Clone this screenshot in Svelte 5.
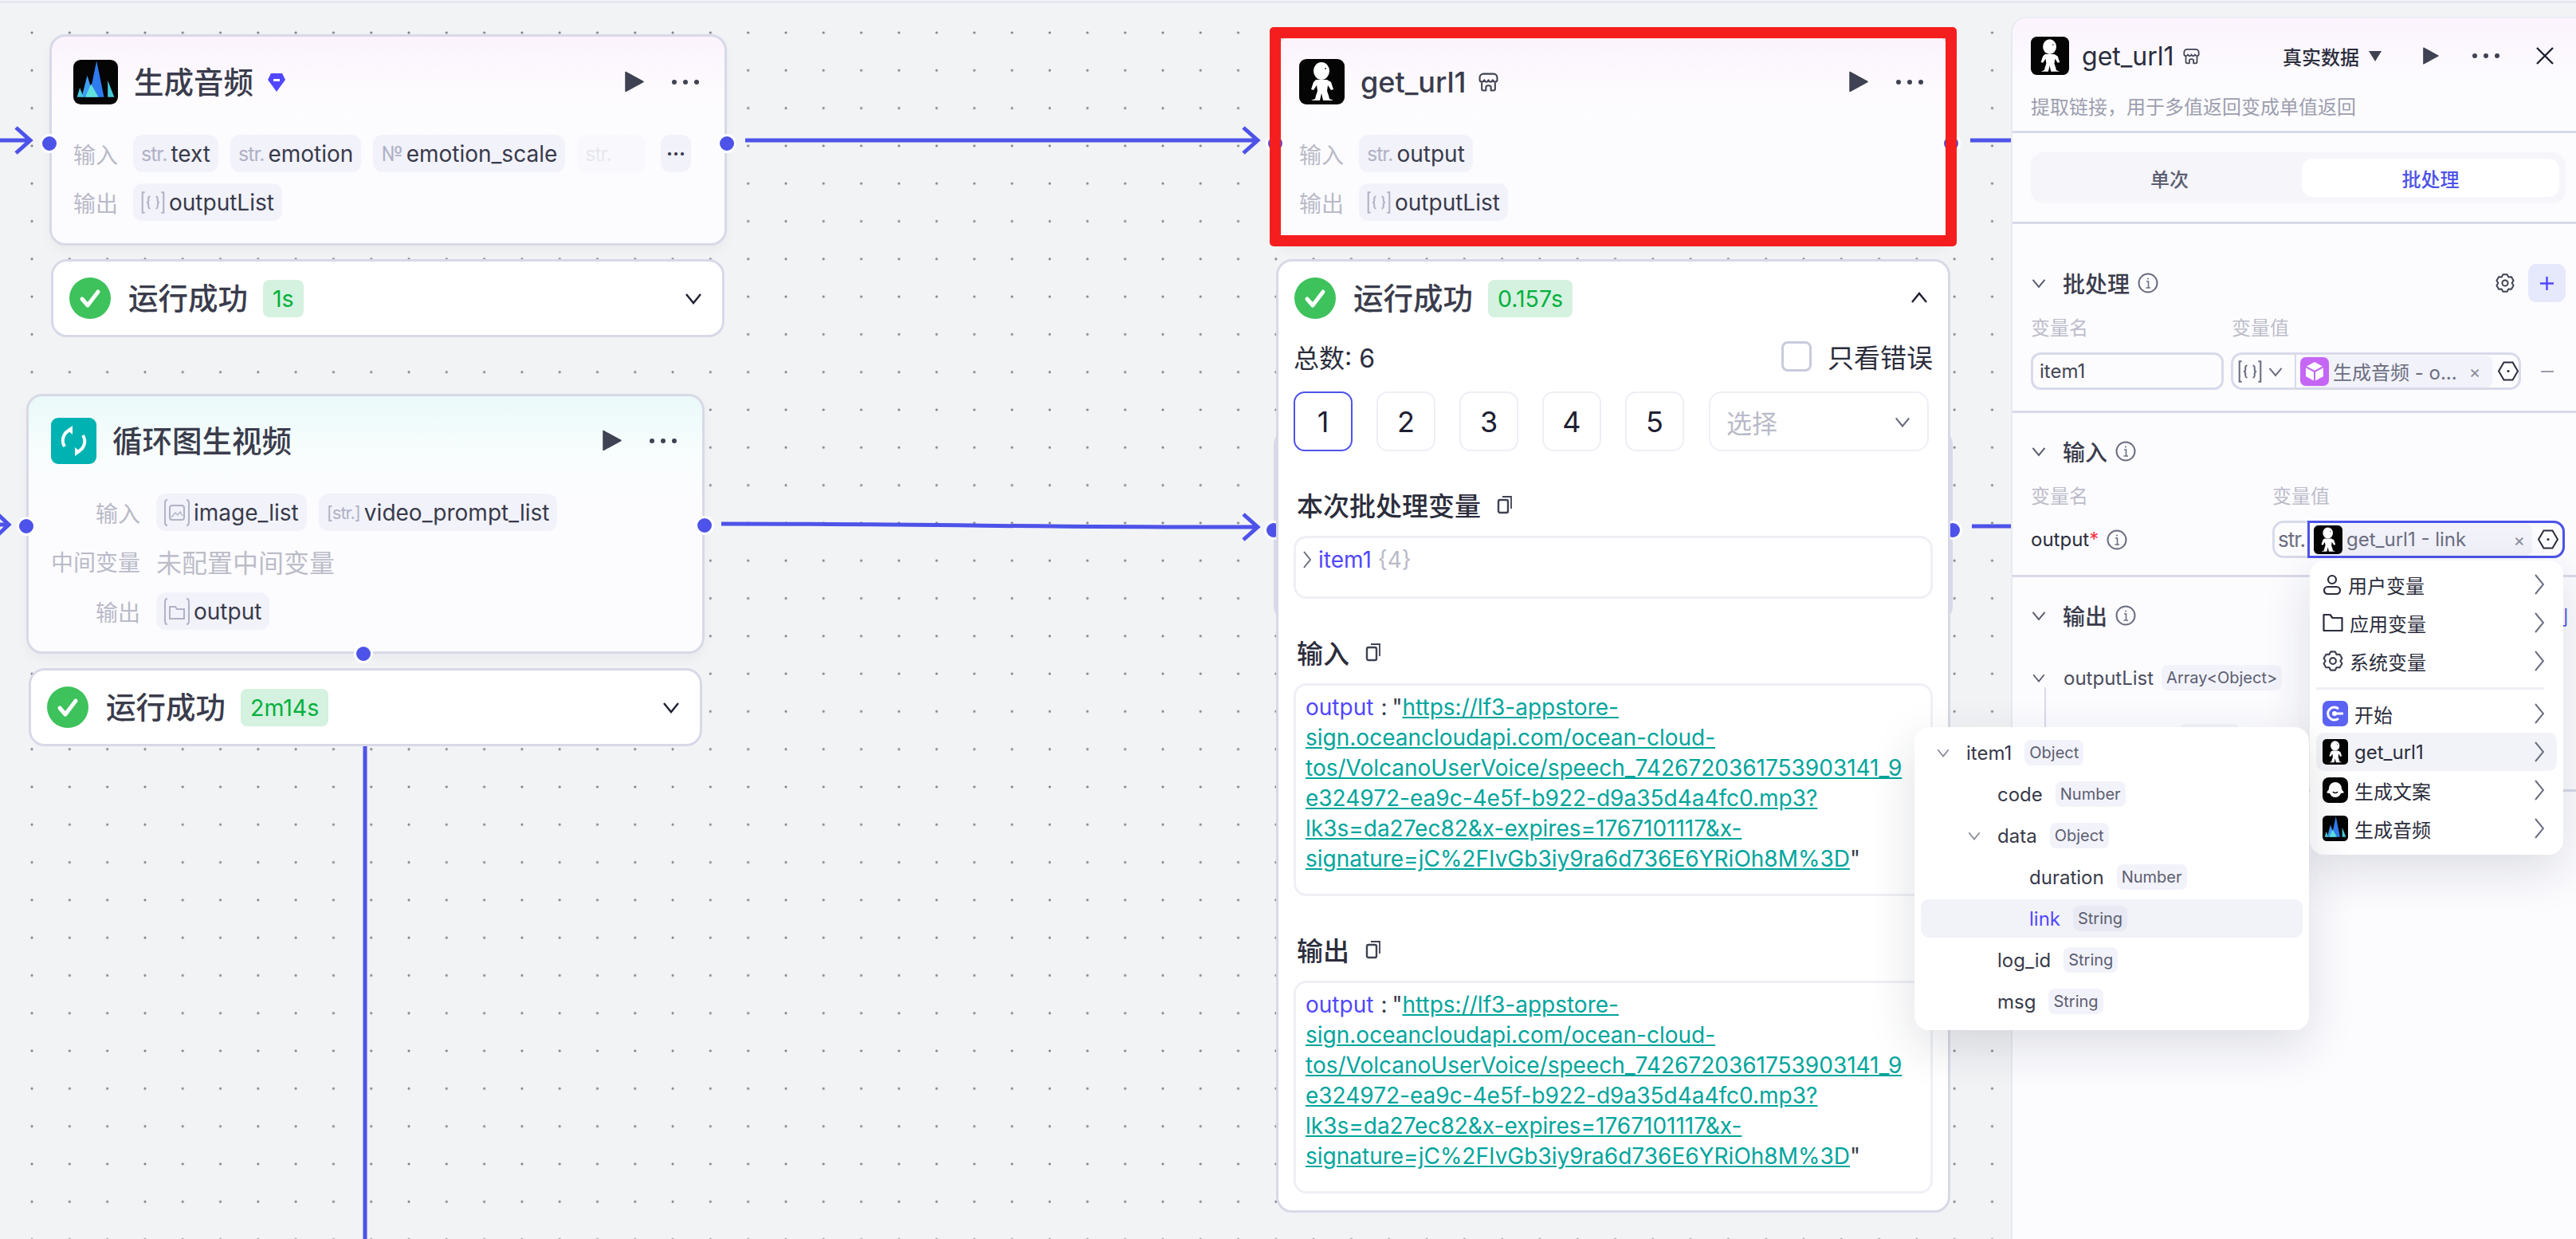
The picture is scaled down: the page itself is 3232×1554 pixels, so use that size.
<script>
  const url = "https://lf3-appstore-sign.oceancloudapi.com/ocean-cloud-tos/VolcanoUserVoice/speech_7426720361753903141_9e324972-ea9c-4e5f-b922-d9a35d4a4fc0.mp3?lk3s=da27ec82&x-expires=1767101117&x-signature=jC%2FIvGb3iy9ra6d736E6YRiOh8M%3D";
  const pages = [1, 2, 3, 4, 5];
  const tree = [
    { name: "item1", type: "Object", depth: 0, open: true },
    { name: "code", type: "Number", depth: 1 },
    { name: "data", type: "Object", depth: 1, open: true },
    { name: "duration", type: "Number", depth: 2 },
    { name: "link", type: "String", depth: 2, active: true },
    { name: "log_id", type: "String", depth: 1 },
    { name: "msg", type: "String", depth: 1 }
  ];

  // six lobed outline for the settings icons
  function gearPath() {
    let pts = [];
    for (let k = 0; k < 6; k++) {
      let a = k * 60 - 90;
      for (let [off, r] of [[-14, 11], [14, 11], [30, 8.6]]) {
        let t = ((a + off) * Math.PI) / 180;
        pts.push((12 + r * Math.cos(t)).toFixed(2) + " " + (12 + r * Math.sin(t)).toFixed(2));
      }
    }
    return "M" + pts.join("L") + "Z";
  }
  const gearD = gearPath();
</script>

{#snippet person(size)}
  <svg class="logo" width={size} height={size} viewBox="0 0 57 57">
    <rect width="57" height="57" rx="9" fill="#050505" />
    <ellipse cx="28" cy="15" rx="10" ry="11" fill="#fff" />
    <path fill="#fff" d="M21 26h14l5 3 3 9-3 1-4-6-1 7 2 6 1 4 5 2H30l-2-9-2 9H15l5-2 1-4 2-6-1-7-4 6-3-1 3-9z" />
    <circle cx="33" cy="12" r="1" fill="#333" />
  </svg>
{/snippet}

{#snippet spikes(size)}
  <svg class="logo" width={size} height={size} viewBox="0 0 48 48">
    <rect width="48" height="48" rx="8" fill="#050505" />
    <path fill="#2f7bf0" d="M25 1l8 39H17z" />
    <path fill="#3f9df5" d="M15 17l7 23H9z" />
    <path fill="#47c9dc" d="M7 30l4 10H4zM37 22l7 18h-7z" />
    <path fill="#5fe3dc" d="M19 26l8 14H13z" />
  </svg>
{/snippet}

{#snippet ghost(size)}
  <svg class="logo" width={size} height={size} viewBox="0 0 32 32">
    <rect width="32" height="32" rx="8" fill="#050505" />
    <path fill="#fff" d="M16 6c5 0 8 4 8 8 0 2 2 3 3 5-2 1-3 1-4 1-1 3-4 5-7 5s-6-2-7-5c-1 0-2 0-4-1 1-2 3-3 3-5 0-4 3-8 8-8z" />
    <path fill="none" stroke="#050505" stroke-width="1.5" d="M13 18c1 2 5 2 6 0" />
  </svg>
{/snippet}

{#snippet play(w, h)}
  <svg class="ico" width={w} height={h} viewBox="0 0 24 26"><path fill="#3f4252" d="M1 1l22 12L1 25z" stroke="#3f4252" stroke-linejoin="round" stroke-width="1.5" /></svg>
{/snippet}

{#snippet dots()}
  <svg class="ico" width="36" height="8" viewBox="0 0 36 8"><circle cx="4" cy="4" r="3" fill="#3f4252" /><circle cx="18" cy="4" r="3" fill="#3f4252" /><circle cx="32" cy="4" r="3" fill="#3f4252" /></svg>
{/snippet}

{#snippet check()}
  <svg class="ico" width="52" height="52" viewBox="0 0 52 52"><circle cx="26" cy="26" r="26" fill="#3dc25c" /><path d="M16 27l7 8 13-17" fill="none" stroke="#fff" stroke-width="5" stroke-linecap="round" stroke-linejoin="round" /></svg>
{/snippet}

{#snippet chev(w, color, dir)}
  <svg class="ico {dir}" width={w} height={w} viewBox="0 0 24 24"><path d="M3 7l9 11 9-11" fill="none" stroke={color} stroke-width="2.4" /></svg>
{/snippet}

{#snippet right()}
  <svg class="ico" width="12" height="26" viewBox="0 0 12 26"><path d="M1 1l10 12L1 25" fill="none" stroke="#6b6e80" stroke-width="2" /></svg>
{/snippet}

{#snippet copy()}
  <svg class="ico" width="20" height="24" viewBox="0 0 20 24" fill="none" stroke="#3f4252" stroke-width="2.4"><rect x="2" y="6" width="12" height="16" rx="2" /><path d="M7 2h9l2 0v15" stroke-width="1.8" /></svg>
{/snippet}

{#snippet info()}
  <svg class="ico" width="26" height="26" viewBox="0 0 26 26" fill="none" stroke="#6b6e80" stroke-width="2"><circle cx="13" cy="13" r="11.5" /><path d="M11 11h2.5v8M10.5 19h5.5" stroke-width="1.6" /><circle cx="13" cy="7.5" r="1" fill="#6b6e80" stroke="none" /></svg>
{/snippet}

{#snippet hex()}
  <svg class="ico" width="26" height="25" viewBox="0 0 26 25" fill="none" stroke="#2b2d3c" stroke-width="2"><path d="M7.5 1.5h11L25 12.5l-6.5 11h-11L1 12.5z" /><circle cx="13" cy="12.500" r="1.6" fill="#2b2d3c" stroke="none" /></svg>
{/snippet}

{#snippet gear(s)}
  <svg class="ico" width={s} height={s} viewBox="0 0 24 24" fill="none" stroke="#3f4252" stroke-width="2" stroke-linejoin="round"><path d={gearD} /><circle cx="12" cy="12" r="3.6" /></svg>
{/snippet}

{#snippet plug(w, h)}
  <svg class="ico" width={w} height={h} viewBox="0 0 24 23" fill="none" stroke="#3f4252" stroke-width="2" stroke-linejoin="round"><path d="M6 1.500h12c2.500 0 4.500 2 4.500 4.500v3c0 2.500-4.500 3-5.500 0-1 3-4 3-5 0-1 3-4 3-5 0-1 3-5.500 2.500-5.500 0V6c0-2.500 2-4.500 4.500-4.500z" /><path d="M4 12v8c0 1 1 1.500 2 1.500h3v-4c0-1 1-2 3-2s3 1 3 2v4h3c1 0 2-.5 2-1.500v-8" /></svg>
{/snippet}

{#snippet brace(color)}
  <svg class="ico" width="30" height="32" viewBox="0 0 26 30" preserveAspectRatio="none" fill="none" stroke={color} stroke-width="1.8"><path d="M4 3H1.500v24H4M22 3h2.500v24H22" /><path d="M10 8c-2 0-2 1-2 3v2c0 1-1 2-2 2 1 0 2 1 2 2v2c0 2 0 3 2 3M16 8c2 0 2 1 2 3v2c0 1 1 2 2 2-1 0-2 1-2 2v2c0 2 0 3-2 3" /></svg>
{/snippet}

<div class="canvas">
  <div class="topline"></div>

  <svg class="wires" width="3232" height="1554" viewBox="0 0 3232 1554" fill="none" stroke="#4d53e8" stroke-width="5">
    <path d="M0 176H37M20 160l18 16-18 16" />
    <path d="M935 176H1576M1560 160l18 16-18 16" />
    <path d="M0 658H10M-8 640l19 18-19 18" />
    <path d="M905 657C1200 657 1300 662 1576 661M1560 645l18 16-18 16" />
    <path d="M458 935V1554" />
    <path d="M2472 176H2523M2474 660H2523" />
  </svg>

  <section class="node n1">
    <header class="nhead">
      {@render spikes(56)}
      <h3 class="cjk">生成音频</h3>
      <svg class="ico badge" width="24" height="24" viewBox="0 0 24 24"><path fill="#5147ff" d="M5 1h14l4 8-11 15L1 9z" /><rect x="8" y="8" width="8" height="3" fill="#fff" /></svg>
      <span class="fill"></span>
      {@render play(24, 27)}
      <span class="gapdots">{@render dots()}</span>
    </header>
    <div class="row lab92">
      <span class="lab">输入</span>
      <span class="chip"><span class="mark">str.</span>text</span>
      <span class="chip"><span class="mark">str.</span>emotion</span>
      <span class="chip"><span class="mark">№</span>emotion_scale</span>
      <span class="chip faded"><span class="mark">str.</span></span>
      <span class="chip more">···</span>
    </div>
    <div class="row lab92">
      <span class="lab">输出</span>
      <span class="chip">{@render brace("#b0b2c6")}outputList</span>
    </div>
    <span class="handle hl"></span>
    <span class="handle hr"></span>
  </section>

  <div class="status s1">
    {@render check()}
    <b>运行成功</b>
    <span class="time">1s</span>
    <span class="fill"></span>
    {@render chev(24, "#1f2033", "")}
  </div>

  <section class="node n2">
    <header class="nhead">
      <svg class="logo" width="57" height="58" viewBox="0 0 57 58"><rect width="57" height="58" rx="9" fill="#00b2b2" /><path d="M17 36a14 14 0 0 1 8-21M40 22a14 14 0 0 1-8 21" fill="none" stroke="#fff" stroke-width="4" /><path d="M27 10v11l-7-6zM30 48V37l7 6z" fill="#fff" /></svg>
      <h3 class="cjk">循环图生视频</h3>
      <span class="fill"></span>
      {@render play(24, 27)}
      <span class="gapdots">{@render dots()}</span>
    </header>
    <div class="row lab2">
      <span class="lab">输入</span>
      <span class="chip"><svg class="ico" width="32" height="36" viewBox="0 0 32 36" fill="none" stroke="#b0b2c6" stroke-width="2"><path d="M4 2C1 2 1 4 1 6v24c0 2 0 4 3 4M28 2c3 0 3 2 3 4v24c0 2 0 4-3 4" /><rect x="7" y="9" width="18" height="18" rx="3" /><path d="M9 24l5-6 3 3 3-4 3 5" stroke-width="1.4" /></svg>image_list</span>
      <span class="chip"><span class="mark small">[str.]</span>video_prompt_list</span>
    </div>
    <div class="row lab2 tall">
      <span class="lab">中间变量</span>
      <span class="none">未配置中间变量</span>
    </div>
    <div class="row lab2">
      <span class="lab">输出</span>
      <span class="chip"><svg class="ico" width="32" height="36" viewBox="0 0 32 36" fill="none" stroke="#b0b2c6" stroke-width="2"><path d="M4 2C1 2 1 4 1 6v24c0 2 0 4 3 4M28 2c3 0 3 2 3 4v24c0 2 0 4-3 4" /><path d="M7 12h7l2 3h9v12H7z" /></svg>output</span>
    </div>
    <span class="handle hl"></span>
    <span class="handle hr"></span>
    <span class="handle hb"></span>
  </section>

  <div class="status s2">
    {@render check()}
    <b>运行成功</b>
    <span class="time">2m14s</span>
    <span class="fill"></span>
    {@render chev(24, "#1f2033", "")}
  </div>

  <section class="node n3">
    <header class="nhead">
      {@render person(57)}
      <h3>get_url1</h3>
      {@render plug(25, 24)}
      <span class="fill"></span>
      {@render play(24, 27)}
      <span class="gapdots">{@render dots()}</span>
    </header>
    <div class="row lab92">
      <span class="lab">输入</span>
      <span class="chip"><span class="mark">str.</span>output</span>
    </div>
    <div class="row lab92">
      <span class="lab">输出</span>
      <span class="chip">{@render brace("#b0b2c6")}outputList</span>
    </div>
    <span class="handle hl"></span>
    <span class="handle hr"></span>
  </section>
  <div class="redbox"></div>

  <div class="under">
    <span class="handle hl"></span>
    <span class="handle hr"></span>
  </div>

  <section class="result">
    <div class="rhead">
      {@render check()}
      <b>运行成功</b>
      <span class="time">0.157s</span>
      <span class="fill"></span>
      {@render chev(24, "#1f2033", "up")}
    </div>
    <div class="total">
      <span>总数: 6</span>
      <span class="fill"></span>
      <span class="box"></span>
      <span class="only">只看错误</span>
    </div>
    <div class="pager">
      {#each pages as p}
        <button class:cur={p === 1}>{p}</button>
      {/each}
      <div class="select"><span>选择</span>{@render chev(22, "#6b6e80", "")}</div>
    </div>
    <h4 class="first">本次批处理变量 {@render copy()}</h4>
    <div class="code short">
      <svg class="ico" width="12" height="24" viewBox="0 0 12 24"><path d="M2 2l8 10-8 10" fill="none" stroke="#6b6e80" stroke-width="2" /></svg>
      <span class="key">item1</span> <span class="cnt">{"{4}"}</span>
    </div>
    <h4>输入 {@render copy()}</h4>
    <div class="code"><span class="key">output</span><span class="colon">:</span>"<a href="#top">{url}</a>"</div>
    <h4>输出 {@render copy()}</h4>
    <div class="code"><span class="key">output</span><span class="colon">:</span>"<a href="#top">{url}</a>"</div>
  </section>

  <aside class="panel">
    <header class="phead">
      <div class="ptitle">
        {@render person(48)}
        <h2>get_url1</h2>
        {@render plug(21, 21)}
        <span class="fill"></span>
        <span class="mode">真实数据</span>
        <svg class="ico" width="16" height="14" viewBox="0 0 16 14"><path d="M0 1h16L8 14z" fill="#3f4252" /></svg>
        <span class="p1">{@render play(20, 22)}</span>
        <span class="p2">{@render dots()}</span>
        <svg class="ico close" width="22" height="22" viewBox="0 0 22 22"><path d="M1 1l20 20M21 1L1 21" stroke="#1f2033" stroke-width="2.4" /></svg>
      </div>
      <p>提取链接，用于多值返回变成单值返回</p>
    </header>

    <div class="tabwrap">
      <div class="tabs">
        <span>单次</span>
        <span class="on">批处理</span>
      </div>
    </div>

    <section class="sec batch">
      <div class="shead">
        {@render chev(20, "#5b5e70", "")}
        <b>批处理</b>
        {@render info()}
        <span class="fill"></span>
        {@render gear(24)}
        <span class="plus"><svg width="17" height="17" viewBox="0 0 17 17"><path d="M8.500 0v17M0 8.500h17" stroke="#5147ff" stroke-width="2.400" /></svg></span>
      </div>
      <div class="cols"><span class="c1">变量名</span><span>变量值</span></div>
      <div class="vars">
        <span class="input">item1</span>
        <div class="combo wide">
          <div class="ctype">{@render brace("#6b6e80")}{@render chev(20, "#6b6e80", "")}</div>
          <div class="cval">
            <span class="vchip">
              <svg class="logo" width="36" height="36" viewBox="0 0 36 36"><rect width="36" height="36" rx="7" fill="#c566f5" /><path d="M18 6l11 6v12l-11 6-11-6V12z" fill="#fff" /><path d="M7 12l11 6 11-6M18 18v12" stroke="#c566f5" stroke-width="2" fill="none" /></svg>
              <em>生成音频 - o...</em>
              <i>×</i>
            </span>
            {@render hex()}
          </div>
        </div>
        <svg class="ico minus" width="16" height="2" viewBox="0 0 16 2"><rect width="16" height="2" fill="#9a9cac" /></svg>
      </div>
    </section>

    <section class="sec inputs">
      <div class="shead">
        {@render chev(20, "#5b5e70", "")}
        <b>输入</b>
        {@render info()}
      </div>
      <div class="cols"><span class="c2">变量名</span><span>变量值</span></div>
      <div class="vars">
        <span class="oname">output<u>*</u> {@render info()}</span>
        <div class="combo narrow">
          <div class="ctype"><span class="mark dark">str.</span></div>
          <div class="cval focus">
            <span class="vchip">
              {@render person(36)}
              <em>get_url1 - link</em>
              <span class="fill"></span>
              <i>×</i>
            </span>
            {@render hex()}
          </div>
        </div>
      </div>
    </section>

    <section class="sec outs">
      <div class="shead">
        {@render chev(20, "#5b5e70", "")}
        <b>输出</b>
        {@render info()}
        <span class="fill"></span>
        <span class="blue">列</span>
      </div>
      <div class="olist">
        {@render chev(18, "#5b5e70", "")}
        <span>outputList</span>
        <span class="tag">Array&lt;Object&gt;</span>
      </div>
      <div class="otree"><span class="tag">Object</span></div>
    </section>
  </aside>

  <div class="menu">
    <div class="mi">
      <svg class="ico" width="24" height="26" viewBox="0 0 24 26" fill="none" stroke="#2b2d3c" stroke-width="2.2"><circle cx="12" cy="7" r="5" /><rect x="2" y="16" width="20" height="9" rx="4.5" /></svg>
      <span>用户变量</span>{@render right()}
    </div>
    <div class="mi">
      <svg class="ico" width="26" height="24" viewBox="0 0 26 24" fill="none" stroke="#2b2d3c" stroke-width="2.2"><path d="M1.5 2h8l3 4h12v16h-23z" stroke-linejoin="round" /></svg>
      <span>应用变量</span>{@render right()}
    </div>
    <div class="mi">{@render gear(26)}<span>系统变量</span>{@render right()}</div>
    <hr />
    <div class="mi">
      <svg class="logo" width="32" height="32" viewBox="0 0 32 32"><rect width="32" height="32" rx="7" fill="#5c62f2" /><path d="M20 10a8 8 0 1 0 0 12" fill="none" stroke="#fff" stroke-width="3" /><circle cx="15" cy="16" r="3" fill="#fff" /><path d="M15 16h11" stroke="#fff" stroke-width="3" /></svg>
      <span>开始</span>{@render right()}
    </div>
    <div class="mi hover">{@render person(32)}<span>get_url1</span>{@render right()}</div>
    <div class="mi">{@render ghost(32)}<span>生成文案</span>{@render right()}</div>
    <div class="mi">{@render spikes(32)}<span>生成音频</span>{@render right()}</div>
  </div>

  <div class="submenu">
    {#each tree as t}
      <div class="ti d{t.depth}" class:act={t.active}>
        {#if t.open}<span class="tchev">{@render chev(18, "#8a8c9c", "")}</span>{/if}
        <span class="tn">{t.name}</span>
        <span class="tag">{t.type}</span>
      </div>
    {/each}
  </div>
</div>

<style>
  :global(body) { margin: 0; background: #f2f3f5; }
  .canvas {
    position: relative;
    width: 3232px;
    height: 1554px;
    overflow: hidden;
    font-family: Inter, "Noto Sans CJK SC", sans-serif;
    color: #383a4a;
    background-color: #f2f3f5;
    background-image: radial-gradient(circle, #7d7e8a 1.2px, transparent 1.8px);
    background-size: 47.3px 47.3px;
    background-position: 16.4px 17.4px;
  }
  .topline { position: absolute; left: 0; right: 0; top: 1px; height: 3px; background: #e6e7f3; }
  .wires { position: absolute; left: 0; top: 0; }
  .ico, .logo { flex: none; display: block; }
  .ico.up { transform: rotate(180deg); }
  .fill { flex: 1; }

  .node {
    position: absolute;
    box-sizing: border-box;
    border: 3px solid #d8d9e7;
    border-radius: 20px;
    background: linear-gradient(#fbf3fd 0, #fdfbfe 70px, #fcfcff 130px);
    box-shadow: 0 6px 14px rgba(0, 0, 0, .04);
  }
  .n1 { left: 62px; top: 43px; width: 850px; height: 265px; padding: 28px 28px 0 27px; }
  .n2 { left: 33px; top: 494px; width: 851px; height: 326px; padding: 27px 28px 0; background: linear-gradient(#eaf9f9 0, #f8fdfd 70px, #fcfcff 130px); }
  .n3 { left: 1600px; top: 43px; width: 848px; height: 265px; padding: 28px 28px 0 27px; }
  .nhead { display: flex; align-items: center; height: 57px; margin-bottom: 38px; }
  h3 { margin: 0 0 0 20px; font-size: 36px; font-weight: 500; color: #3a3c4c; }
  h3.cjk { font-size: 37.5px; margin-bottom: 5px; }
  .n3 h3 { margin-right: 15px; }
  .badge { margin-left: 17px; }
  .n1 .gapdots, .n2 .gapdots, .n3 .gapdots { margin: 0 3px 0 34px; }
  .row { display: flex; align-items: center; gap: 15px; height: 47px; margin-bottom: 14px; white-space: nowrap; }
  .lab { font-size: 28px; color: #b9bac8; }
  .lab92 .lab { width: 56px; margin-right: 4px; }
  .lab2 { margin-bottom: 13px; }
  .lab2 .lab { width: 112px; text-align: right; margin-right: 5px; }
  .tall { height: 50px; margin-bottom: 14px; }
  .none { font-size: 32px; color: #bcbdc9; }
  .chip {
    display: inline-flex;
    align-items: center;
    gap: 5px;
    height: 47px;
    padding: 0 10px;
    border-radius: 12px;
    background: #f2f2fa;
    font-size: 28px;
    color: #383a4a;
  }
  .mark { color: #b0b2c6; font-size: 25px; letter-spacing: -1px; }
  .mark.small { font-size: 22px; }
  .mark.dark { color: #6b6e80; font-size: 26px; }
  .faded { opacity: .28; width: 66px; }
  .more { position: absolute; left: 764px; width: 38px; padding: 0; justify-content: center; font-size: 24px; font-weight: 700; }

  .handle {
    position: absolute;
    width: 18px;
    height: 18px;
    border: 3px solid #fff;
    border-radius: 50%;
    background: #4d53e8;
  }
  .hl { left: -15px; top: 122px; }
  .hr { right: -15px; top: 122px; }
  .n2 .hl, .n2 .hr { top: 151px; }
  .n2 .hr { top: 150px; }
  .hb { left: 408px; bottom: -15px; }
  .under .hl, .under .hr { top: 112px; }

  .status {
    position: absolute;
    box-sizing: border-box;
    display: flex;
    align-items: center;
    height: 98px;
    padding: 0 24px 0 20px;
    border: 3px solid #d8d9e7;
    border-radius: 20px;
    background: #fff;
  }
  .s1 { left: 64px; top: 325px; width: 845px; }
  .s2 { left: 36px; top: 838px; width: 845px; }
  .status b, .rhead b { margin: 0 0 5px 22px; font-size: 37.5px; font-weight: 500; color: #3a3c4c; }
  .time {
    display: flex;
    align-items: center;
    height: 47px;
    margin-left: 19px;
    padding: 0 12px;
    border-radius: 8px;
    background: #d5f1df;
    font-size: 28.500px;
    color: #00b03c;
  }

  .redbox {
    position: absolute;
    left: 1593px;
    top: 34px;
    width: 862px;
    height: 275px;
    box-sizing: border-box;
    border: 14px solid #f51e1e;
    border-radius: 5px;
  }
  .under {
    position: absolute;
    left: 1598px;
    top: 538px;
    width: 852px;
    height: 242px;
    box-sizing: border-box;
    border: 3px solid #d8d9e7;
    border-radius: 20px;
    background: #fff;
  }

  .result {
    position: absolute;
    left: 1601px;
    top: 325px;
    width: 846px;
    height: 1196px;
    box-sizing: border-box;
    padding: 20px 19px 0 19px;
    border: 3px solid #d8d9e7;
    border-radius: 20px;
    background: #fff;
  }
  .rhead { display: flex; align-items: center; height: 52px; padding: 0 5px 0 1px; }
  .total { display: flex; align-items: center; height: 40px; margin-top: 27px; font-size: 32px; color: #2b2d3c; gap: 20px; }
  .only { font-size: 33px; }
  .box { width: 38px; height: 38px; box-sizing: border-box; border: 3px solid #c9cbdc; border-radius: 8px; }
  .pager { display: flex; gap: 30px; margin-top: 24px; }
  .pager button {
    width: 74px;
    height: 75px;
    padding: 0;
    border: 2px solid #eeeff5;
    border-radius: 14px;
    background: #fff;
    font: 36px Inter, sans-serif;
    color: #1f2033;
  }
  .pager button.cur { border-color: #4d53e8; }
  .select {
    display: flex;
    align-items: center;
    justify-content: space-between;
    width: 276px;
    height: 75px;
    box-sizing: border-box;
    margin-left: 1px;
    padding: 0 20px;
    border: 2px solid #eeeff5;
    border-radius: 16px;
    font-size: 32px;
    color: #b9bac8;
  }
  h4 { display: flex; align-items: center; gap: 20px; margin: 43px 0 15px 4px; height: 48px; font-size: 33px; font-weight: 500; color: #2b2d3c; }
  h4.first { margin-top: 43px; margin-bottom: 15px; }
  .code {
    box-sizing: border-box;
    width: 802px;
    height: 267px;
    padding: 8px 26px 0 12px;
    border: 3px solid #efeff5;
    border-radius: 16px;
    font-size: 28px;
    line-height: 38px;
    color: #383a4a;
    overflow-wrap: anywhere;
  }
  .code.short { display: flex; align-items: flex-start; gap: 8px; height: 79px; padding: 8px 8px 0; }
  .code.short svg { margin-top: 7px; }
  .key { color: #5147ff; }
  .colon { margin: 0 6px 0 9px; }
  .cnt { color: #b9bac8; }
  .code a { color: #00a59c; }

  .panel {
    position: absolute;
    left: 2523px;
    top: 21px;
    right: 0;
    bottom: 0;
    display: flex;
    flex-direction: column;
    border-left: 2px solid #e8e8f2;
    border-top: 2px solid #ececf5;
    border-top-left-radius: 20px;
    background: #fcfcff;
    font-size: 24px;
  }
  .phead {
    box-sizing: border-box;
    height: 144px;
    padding: 23px 0 0 23px;
    border-bottom: 3px solid #d8daea;
    border-top-left-radius: 20px;
    background: linear-gradient(#fbf3fd, #fcfcff 80px);
  }
  .ptitle { display: flex; align-items: center; height: 48px; padding-right: 28px; }
  h2 { margin: 0 11px 0 16px; font-size: 32px; font-weight: 400; color: #2b2d3c; }
  .mode { margin-right: 12px; font-weight: 500; color: #2b2d3c; }
  .p1 { margin-left: 52px; }
  .p2 { margin-left: 41px; }
  .close { margin-left: 45px; }
  p { margin: 21px 0 0; color: #9c9eae; }
  .tabwrap { box-sizing: border-box; height: 114px; padding: 24px 13px 0 23px; border-bottom: 3px solid #d8daea; }
  .tabs {
    display: flex;
    box-sizing: border-box;
    height: 64px;
    padding: 8px;
    border-radius: 16px;
    background: #f5f5fa;
  }
  .tabs span { flex: 1; display: flex; align-items: center; justify-content: center; font-weight: 500; color: #5b5e70; border-radius: 14px; }
  .tabs span:first-child { flex: 0 0 332px; }
  .tabs .on { background: #fff; color: #4d53e8; }
  .sec { box-sizing: border-box; padding: 0 13px 0 23px; border-bottom: 3px solid #d8daea; }
  .batch { height: 237px; padding-top: 50px; }
  .inputs { height: 206px; padding-top: 24px; }
  .outs { height: 269px; padding-top: 24px; position: relative; }
  .shead { display: flex; align-items: center; gap: 10px; height: 48px; }
  .shead b { margin-left: 10px; font-size: 28px; font-weight: 500; color: #3a3c4c; }
  .plus { display: flex; align-items: center; justify-content: center; width: 47px; height: 48px; margin-left: 7px; border-radius: 10px; background: #e6e8fb; }
  .cols { display: flex; margin-top: 12px; height: 36px; align-items: center; color: #bcbdc9; }
  .c1 { width: 252px; }
  .c2 { width: 303px; }
  .vars { display: flex; align-items: center; margin-top: 15px; height: 47px; }
  .input { box-sizing: border-box; display: flex; align-items: center; width: 242px; height: 47px; padding: 0 8px; border: 3px solid #d8daea; border-radius: 12px; color: #444656; }
  .combo { display: flex; box-sizing: border-box; height: 47px; border: 3px solid #d8daea; border-radius: 14px; }
  .combo.wide { width: 364px; margin-left: 9px; }
  .combo.narrow { width: 367px; margin-left: 0; }
  .ctype { display: flex; align-items: center; gap: 7px; padding-left: 6px; width: 79px; box-sizing: border-box; border-right: 2px solid #d8daea; color: #6b6e80; }
  .narrow .ctype { width: 44px; padding-left: 4px; border-right: 0; }
  .cval { flex: 1; display: flex; align-items: center; gap: 7px; padding-left: 5px; min-width: 0; box-sizing: border-box; }
  .cval.focus { margin: -3px; border: 3px solid #4d53e8; border-radius: 0 14px 14px 0; padding: 0 5px 0 5px; }
  .vchip { flex: 1; display: flex; align-items: center; gap: 5px; height: 40px; padding-right: 9px; border-radius: 8px; background: #f2f2fa; color: #6b6e80; white-space: nowrap; min-width: 0; }
  .vchip em { font-style: normal; }
  .vchip i { margin-left: 10px; font-style: normal; font-size: 22px; color: #8a8c9c; }
  .minus { margin-left: 25px; }
  .oname { display: flex; align-items: center; width: 303px; color: #2b2d3c; }
  .oname u { color: #f5333f; text-decoration: none; }
  .oname :global(svg) { margin-left: 10px; }
  .blue { position: absolute; left: 673px; color: #4d53e8; font-size: 24px; }
  .olist { display: flex; align-items: center; gap: 10px; margin: 38px 0 0 1px; height: 32px; color: #4b4d5e; }
  .olist span:nth-child(2) { margin-left: 12px; }
  .tag { display: inline-flex; align-items: center; height: 32px; padding: 0 6px; border-radius: 8px; background: #f2f2fa; font-size: 20px; color: #5b5e70; }
  .otree { margin: 10px 0 0 187px; height: 60px; padding-top: 32px; }
  .outs::after { content: ""; position: absolute; left: 40px; top: 138px; width: 2px; height: 90px; background: #d8daea; }

  .menu {
    position: absolute;
    left: 2898px;
    top: 703px;
    width: 318px;
    height: 369px;
    box-sizing: border-box;
    padding: 6px 8px;
    border-radius: 18px;
    background: #fff;
    box-shadow: 0 20px 60px rgba(30, 32, 60, .14);
    font-size: 24px;
    color: #2b2d3c;
  }
  .mi { display: flex; align-items: center; gap: 8px; height: 48px; padding: 0 16px 0 8px; border-radius: 10px; }
  .mi span { flex: 1; }
  .mi.hover { background: #f2f3f8; }
  .menu hr { height: 3px; margin: 9px 16px 6px 0; border: 0; background: #eeeff5; }
  .submenu {
    position: absolute;
    left: 2402px;
    top: 912px;
    width: 495px;
    height: 380px;
    box-sizing: border-box;
    padding: 8px;
    border-radius: 18px;
    background: #fff;
    box-shadow: 0 20px 60px rgba(30, 32, 60, .14);
    font-size: 24px;
    color: #383a4a;
  }
  .ti { position: relative; display: flex; align-items: center; gap: 16px; height: 48px; margin-bottom: 4px; border-radius: 10px; }
  .d0 { padding-left: 57px; }
  .d1 { padding-left: 96px; }
  .d2 { padding-left: 136px; }
  .tchev { position: absolute; top: 15px; margin-left: -38px; }
  .ti.act { background: #f2f3f8; }
  .act .tn { color: #5147ff; }
  .act .tag { background: #e8e9f3; }
</style>
